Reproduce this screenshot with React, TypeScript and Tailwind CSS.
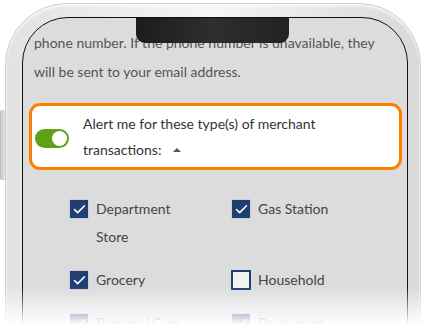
import { Check } from 'lucide-react'

const font = { fontFamily: 'Lato, "Open Sans", Arial, sans-serif' }

function Box({ checked }: { checked: boolean }) {
  return checked ? (
    <div className="w-[20px] h-[20px] shrink-0 bg-[#1f3f73] border border-[#c9ced8] flex items-center justify-center">
      <Check className="w-[15px] h-[15px] text-white" strokeWidth={2.5} />
    </div>
  ) : (
    <div className="w-[20px] h-[20px] shrink-0 bg-[#f2f2f2] border-2 border-[#1f3f73]" />
  )
}

function Option({ label, checked }: { label: React.ReactNode; checked: boolean }) {
  return (
    <div className="flex items-start gap-[7px]">
      <div className="pt-[4px]">
        <Box checked={checked} />
      </div>
      <span className="text-[14px] leading-[28px] text-[#454545]">{label}</span>
    </div>
  )
}

export default function App() {
  return (
    <div className="relative w-[425px] h-[325px] overflow-hidden bg-white" style={font}>
      {/* side button */}
      <div className="absolute left-0 top-[110px] w-[5px] h-[70px] rounded-l-[2px] bg-gradient-to-r from-[#bdbdbd] to-[#e6e6e6]" />

      {/* phone bezel */}
      <div className="ml-[5px] mt-[3px] w-[416px] h-[400px] rounded-[62px] bg-gradient-to-r from-[#e2e2e2] via-[#f6f6f6] to-[#d8d8d8] border border-[#cfcfcf] pt-[13px] pl-[16px] pr-[12px] shadow-[inset_0_2px_3px_rgba(255,255,255,0.9)]">
        <div className="relative h-full rounded-[46px] border-[1.5px] border-[#111] bg-[#dcdcdc] overflow-hidden">
          {/* notch */}
          <div className="absolute z-10 left-[113px] top-0 w-[153px] h-[25px] rounded-b-[9px] bg-gradient-to-r from-[#1c1c1c] via-[#2e2e2e] to-[#222]" />

          <div className="pl-[11px] pr-[4px] mt-[-19px] text-[14px] leading-[29px] text-[#555] whitespace-nowrap">
            <p className="-translate-y-[4px]">You will receive alerts by text message to your mobile</p>
            <p>phone number. If the phone number is unavailable, they</p>
            <p>will be sent to your email address.</p>
          </div>

          <div className="mt-[17px] ml-[6px] mr-[5px] h-[67px] rounded-[11px] border-[3px] border-[#ff7d00] bg-white flex items-center gap-[14px] pl-[3px]">
            <div className="w-[34px] h-[19px] rounded-full bg-[#5ea117] flex items-center justify-end pr-[2px] mt-[4px]">
              <div className="w-[15px] h-[15px] rounded-full bg-white" />
            </div>
            <div className="text-[14px] leading-[26px] text-[#333]">
              <p>Alert me for these type(s) of merchant</p>
              <p className="flex items-center gap-[12px]">
                transactions:
                <span className="inline-block w-0 h-0 border-l-[4px] border-r-[4px] border-b-[4px] border-l-transparent border-r-transparent border-b-[#555]" />
              </p>
            </div>
          </div>

          <div className="mt-[25px] ml-[46px] grid grid-cols-[162px_1fr] gap-y-[15px]">
            <Option checked label={<>Department<br />Store</>} />
            <Option checked label="Gas Station" />
            <Option checked label="Grocery" />
            <Option checked={false} label="Household" />
            <Option checked label="Personal Care" />
            <Option checked label="Restaurant" />
          </div>
        </div>
      </div>

      {/* bottom fade */}
      <div className="absolute left-0 right-0 bottom-0 h-[38px] bg-gradient-to-b from-white/0 to-white" />
    </div>
  )
}
